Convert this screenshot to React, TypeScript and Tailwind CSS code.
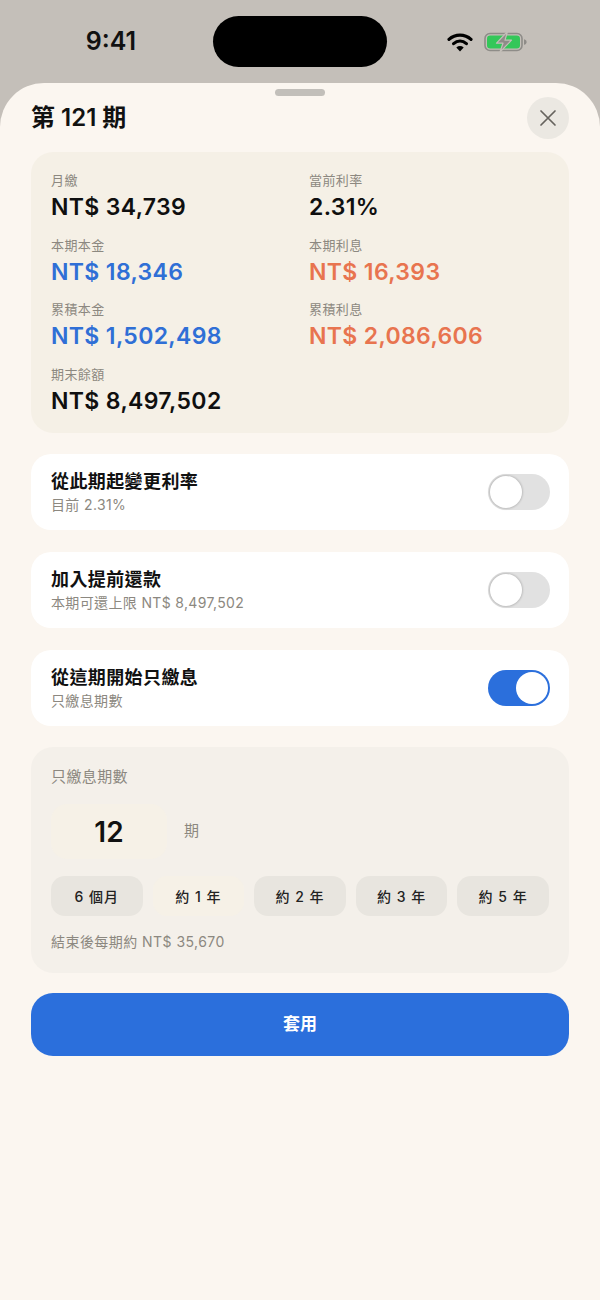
import React from "react";

const FONT = { fontFamily: '"Inter","Noto Sans CJK TC",sans-serif' };

function Stat({ label, value, color = "text-[#0f0f0f]" }: { label: string; value: string; color?: string }) {
  return (
    <div className="h-[64.5px]">
      <div className="h-[18px] text-[13px] leading-[18px] tracking-[0.4px] text-[#8c8880]">{label}</div>
      <div className={`mt-[3px] h-[30px] text-[23px] leading-[30px] font-semibold tracking-[0.35px] ${color}`}>{value}</div>
    </div>
  );
}

function Toggle({ on }: { on?: boolean }) {
  return on ? (
    <div className="flex h-[36px] w-[62px] items-center justify-end rounded-full bg-[#2b6fdc] pr-[2px]">
      <div className="h-[32px] w-[32px] rounded-full bg-white" />
    </div>
  ) : (
    <div className="flex h-[36px] w-[62px] items-center justify-start rounded-full bg-[#e1e1e1] pl-[2px]">
      <div className="h-[32px] w-[32px] rounded-full bg-white shadow-[0_0_2px_1px_rgba(0,0,0,0.16)]" />
    </div>
  );
}

function Row({ title, sub, on }: { title: string; sub: string; on?: boolean }) {
  return (
    <div className="flex h-[76px] items-center justify-between rounded-[20px] bg-white pl-[20px] pr-[19px]">
      <div>
        <div className="h-[26px] text-[18px] leading-[26px] font-semibold tracking-[0.4px] text-[#111]">{title}</div>
        <div className="h-[20px] text-[14px] leading-[20px] tracking-[0.35px] text-[#8c8880]">{sub}</div>
      </div>
      <Toggle on={on} />
    </div>
  );
}

function Chip({ label, active }: { label: string; active?: boolean }) {
  return (
    <div className={`flex h-[40px] flex-1 items-center justify-center rounded-[14px] text-[14px] font-medium tracking-[1px] text-[#222] ${active ? "bg-[#f6f1e7]" : "bg-[#e8e5df]"}`}>
      {label}
    </div>
  );
}

export default function App() {
  return (
    <div style={FONT} className="flex h-[1300px] w-[600px] flex-col overflow-hidden bg-[#c4bfb9]">
      <div className="flex h-[83px] shrink-0 items-start pt-[16px]">
        <div className="flex h-[51px] w-[213px] items-center justify-center pl-[9px] text-[25px] font-semibold text-[#111]">9:41</div>
        <div className="h-[51px] w-[174px] rounded-full bg-black" />
        <div className="flex h-[51px] flex-1 items-center pl-[60px]">
          <svg width="26" height="20" viewBox="0 0 26 20" fill="none" className="mr-[11px]">
            <path d="M2 7.4C8.2 1.8 17.8 1.8 24 7.4" stroke="#000" strokeWidth="3.2" strokeLinecap="round" />
            <path d="M6.6 11.6C10.4 8.4 15.6 8.4 19.4 11.6" stroke="#000" strokeWidth="3.2" strokeLinecap="round" />
            <path d="M13 19.4L9.3 15.4C11.5 13.6 14.5 13.6 16.7 15.4Z" fill="#000" />
          </svg>
          <svg width="44" height="22" viewBox="0 0 44 22" fill="none">
            <rect x="1" y="2.5" width="37" height="17" rx="5" stroke="#8e8c88" strokeWidth="1.6" />
            <rect x="3" y="4.5" width="33" height="13" rx="3.2" fill="#34c759" />
            <path d="M40 8.2C41.8 8.6 42.6 9.6 42.6 11S41.8 13.4 40 13.8Z" fill="#8e8c88" />
            <path d="M23.5 0.5L12.5 12.2H19L16 21L27.5 9.2H21Z" fill="#8e8c88" stroke="#c4bfb9" strokeWidth="1.2" strokeLinejoin="round" />
          </svg>
        </div>
      </div>

      <div className="relative flex-1 rounded-t-[44px] bg-[#fbf6f0] px-[31px]">
        <div className="absolute left-[275px] top-[6px] h-[7px] w-[50px] rounded-full bg-[#c2bfba]" />
        <div className="flex h-[69px] items-center justify-between pt-[1px]">
          <div className="text-[24px] font-semibold text-[#111]">第 121 期</div>
          <div className="flex h-[42px] w-[42px] items-center justify-center rounded-full bg-[#ebe8e2]">
            <svg width="18" height="18" viewBox="0 0 18 18" fill="none">
              <path d="M2 2L16 16M16 2L2 16" stroke="#66635e" strokeWidth="1.7" strokeLinecap="round" />
            </svg>
          </div>
        </div>

        <div className="grid h-[281px] grid-cols-[258px_1fr] content-start rounded-[22px] bg-[#f5f0e6] pl-[20px] pt-[19px]">
          <Stat label="月繳" value="NT$ 34,739" />
          <Stat label="當前利率" value="2.31%" />
          <Stat label="本期本金" value="NT$ 18,346" color="text-[#2f6fd6]" />
          <Stat label="本期利息" value="NT$ 16,393" color="text-[#e8744f]" />
          <Stat label="累積本金" value="NT$ 1,502,498" color="text-[#2f6fd6]" />
          <Stat label="累積利息" value="NT$ 2,086,606" color="text-[#e8744f]" />
          <Stat label="期末餘額" value="NT$ 8,497,502" />
        </div>

        <div className="mt-[21px] flex flex-col gap-[22px]">
          <Row title="從此期起變更利率" sub="目前 2.31%" />
          <Row title="加入提前還款" sub="本期可還上限 NT$ 8,497,502" />
          <Row title="從這期開始只繳息" sub="只繳息期數" on />
        </div>

        <div className="mt-[21px] h-[226px] rounded-[22px] bg-[#f4f0ea] px-[20px] pt-[19px]">
          <div className="h-[22px] text-[15px] leading-[22px] tracking-[0.4px] text-[#8c8880]">只繳息期數</div>
          <div className="mt-[16px] flex items-center">
            <div className="flex h-[55px] w-[116px] items-center justify-center rounded-[16px] bg-[#f6f1e7] text-[28px] font-semibold text-[#111]">12</div>
            <div className="ml-[17px] text-[15px] text-[#8c8880]">期</div>
          </div>
          <div className="mt-[17px] flex gap-[10px] pr-[-1px]">
            <Chip label="6 個月" />
            <Chip label="約 1 年" active />
            <Chip label="約 2 年" />
            <Chip label="約 3 年" />
            <Chip label="約 5 年" />
          </div>
          <div className="mt-[16px] text-[14px] leading-[20px] tracking-[0.45px] text-[#8c8880]">結束後每期約 NT$ 35,670</div>
        </div>

        <div className="mt-[20px] flex h-[63px] items-center justify-center rounded-[22px] bg-[#2b6fdc] text-[17px] font-semibold text-white">套用</div>
      </div>
    </div>
  );
}
